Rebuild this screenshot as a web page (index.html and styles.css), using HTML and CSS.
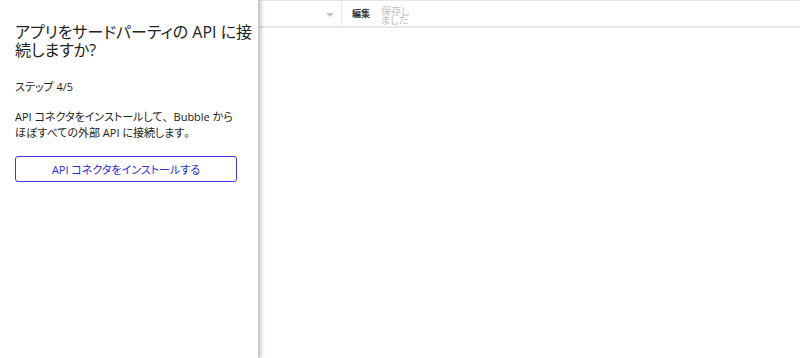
FILE: index.html
```html
<!DOCTYPE html>
<html lang="ja">
  <head>
    <meta charset="UTF-8" />
    <title>API に接続</title>
    <link rel="stylesheet" href="styles.css">
  </head>
  <body>
    <div class="editor">
      <div class="topbar">
        <div class="page-select">
          <span class="caret"></span>
        </div>
        <div class="divider"></div>
        <div class="mode">編集</div>
        <div class="saved">保存しました</div>
      </div>
    </div>

    <aside class="tour-panel">
      <h1 class="tour-title">アプリをサードパーティの API に接続しますか?</h1>
      <p class="tour-step">ステップ 4/5</p>
      <p class="tour-text">API コネクタをインストールして<span class="full">、</span>Bubble からほぼすべての外部 API に接続します<span class="full">。</span></p>
      <button class="tour-button">API コネクタをインストールする</button>
    </aside>
  </body>
</html>
```

FILE: styles.css
```css
body {
  margin: 0;
  background: #fff;
  font-family: "Open Sans", "Noto Sans CJK JP", sans-serif;
  font-feature-settings: "palt";
  color: #222;
  height: 358px;
  overflow: hidden;
}

.editor {
  height: 358px;
}

.topbar {
  display: flex;
  align-items: center;
  height: 25px;
  border-top: 1px solid #e6e6e6;
  border-bottom: 2px solid #e8e8e8;
}

.page-select {
  width: 341px;
  height: 100%;
  display: flex;
  align-items: center;
  justify-content: flex-end;
}

.caret {
  width: 0;
  height: 0;
  border-left: 4px solid transparent;
  border-right: 4px solid transparent;
  border-top: 4px solid #c4c4c4;
  margin-right: 7px;
  margin-top: 2px;
}

.divider {
  width: 1px;
  height: 100%;
  background: #e6e6e6;
}

.mode {
  font-size: 9px;
  font-weight: bold;
  color: #333;
  margin-left: 10px;
}

.saved {
  font-size: 10px;
  color: #c0c0c0;
  width: 31px;
  line-height: 9px;
  margin-left: 11px;
  margin-top: 4px;
}

.tour-panel {
  position: absolute;
  top: 0;
  left: 0;
  width: 241px;
  height: 358px;
  padding: 0 2px 0 15px;
  background: #fff;
  box-shadow: 2px 0 4px rgba(0, 0, 0, 0.25);
  border-right: 1px solid #ccc;
}

.tour-title {
  font-size: 16px;
  font-weight: normal;
  line-height: 18px;
  margin: 23px 0 0;
  color: #222;
}

.tour-step {
  font-size: 11px;
  line-height: 15px;
  margin: 20px 0 0;
}

.tour-text {
  width: 222px;
  font-size: 11px;
  line-height: 16px;
  margin: 15px 0 0;
}

.full {
  font-feature-settings: normal;
}

.tour-button {
  display: block;
  width: 222px;
  height: 26px;
  margin-top: 15px;
  background: #fff;
  border: 1.5px solid #3a3ae0;
  border-radius: 3px;
  color: #2b2bd9;
  font-family: "Open Sans", "Noto Sans CJK JP", sans-serif;
  font-feature-settings: "palt";
  font-size: 11px;
}
```
